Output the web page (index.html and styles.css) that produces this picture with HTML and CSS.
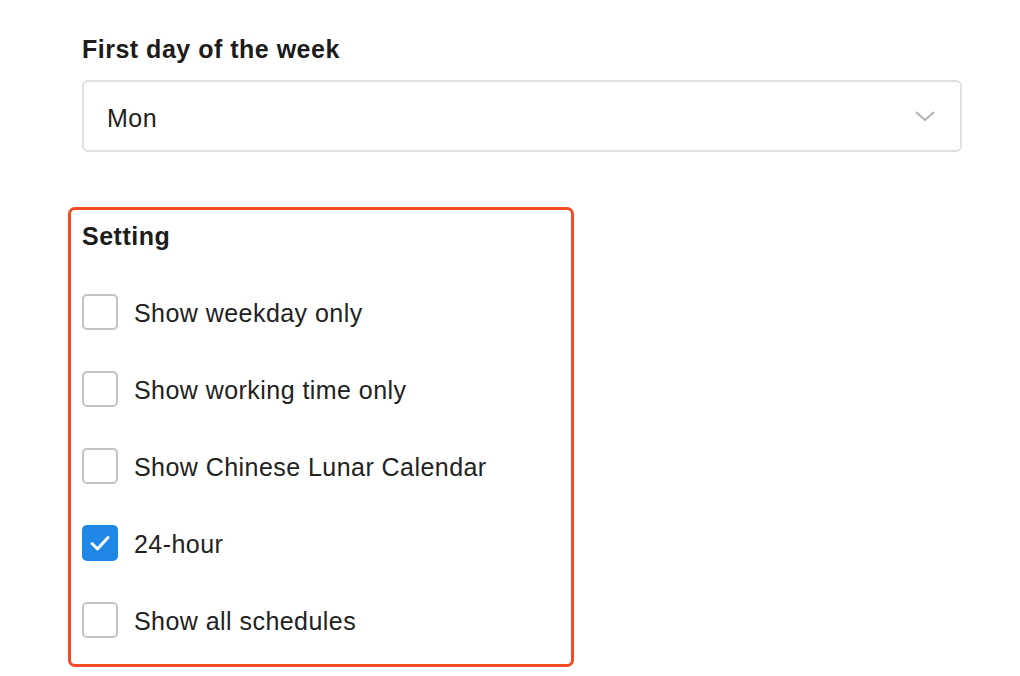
FILE: index.html
```html
<!DOCTYPE html>
<html lang="en">
<head>
    <meta charset="UTF-8">
    <title>Calendar Settings</title>
    <link rel="stylesheet" href="styles.css">
</head>
<body>
    <div class="page">
        <!-- First day of the week -->
        <div class="field">
            <h2 class="field-title">First day of the week</h2>
            <div class="select">
                <span class="select-value">Mon</span>
                <svg class="chevron" viewBox="0 0 20 10" width="20" height="10">
                    <path d="M1,1 L10,9 L19,1" fill="none" stroke="#b3b3b3" stroke-width="2"></path>
                </svg>
            </div>
        </div>

        <!-- Setting checkboxes -->
        <div class="setting-box">
            <h2 class="field-title">Setting</h2>
            <ul class="options">
                <li class="option"><span class="check"></span><span class="label">Show weekday only</span></li>
                <li class="option"><span class="check"></span><span class="label">Show working time only</span></li>
                <li class="option"><span class="check"></span><span class="label">Show Chinese Lunar Calendar</span></li>
                <li class="option">
                    <span class="check checked">
                        <svg viewBox="0 0 36 36" width="36" height="36">
                            <path d="M10,18.5 L15.5,24 L26,12.5" fill="none" stroke="#fff" stroke-width="3" stroke-linecap="round" stroke-linejoin="round"></path>
                        </svg>
                    </span><span class="label">24-hour</span>
                </li>
                <li class="option"><span class="check"></span><span class="label">Show all schedules</span></li>
            </ul>
        </div>
    </div>
</body>
</html>
```

FILE: styles.css
```css
/* General */
body {
    margin: 0;
    background-color: #fff;
    font-family: 'Liberation Sans', Arial, sans-serif;
    color: #222;
}

.page {
    padding-top: 33px;
    width: 1020px;
    height: 643px;
    overflow: hidden;
}

.field {
    padding-left: 82px;
}

.field-title {
    margin: 0;
    font-size: 25px;
    line-height: 32px;
    font-weight: 700;
    letter-spacing: 0.5px;
    color: #1c1c1c;
}

/* Select */
.select {
    margin-top: 15px;
    width: 880px;
    height: 72px;
    box-sizing: border-box;
    border: 2px solid #e0e0e0;
    border-radius: 6px;
    display: flex;
    align-items: center;
    justify-content: space-between;
    padding: 4px 25px 0 23px;
}

.select-value {
    font-size: 25px;
    letter-spacing: 0.45px;
    color: #222;
}

.chevron {
    display: block;
    margin-top: -4px;
}

/* Setting box */
.setting-box {
    margin: 55px 0 0 68px;
    width: 506px;
    box-sizing: border-box;
    border: 3px solid #f24b26;
    border-radius: 7px;
    padding: 10px 0 26px 11px;
}

.options {
    list-style: none;
    margin: 42px 0 0;
    padding: 0;
    display: flex;
    flex-direction: column;
    gap: 41px;
}

.option {
    display: flex;
    align-items: center;
    height: 36px;
    font-size: 25px;
    letter-spacing: 0.45px;
    color: #222;
}

.label {
    margin-top: 2px;
}

.check {
    width: 36px;
    height: 36px;
    box-sizing: border-box;
    border: 2px solid #c4c4c4;
    border-radius: 5px;
    margin-right: 16px;
    flex-shrink: 0;
}

.check.checked {
    border: none;
    background-color: #1f87e5;
}

.check svg {
    display: block;
}
```
